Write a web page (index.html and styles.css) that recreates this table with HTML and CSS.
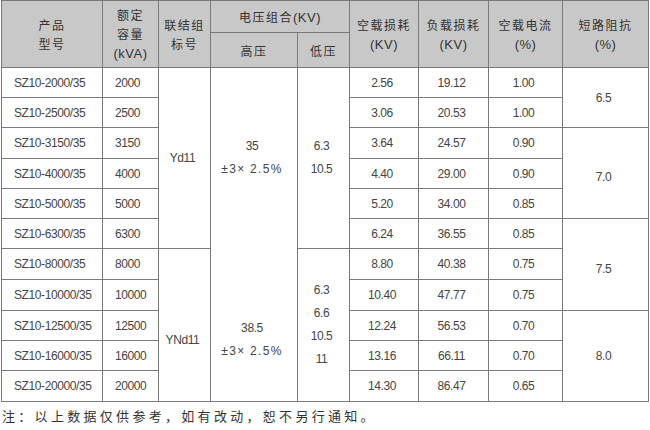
FILE: index.html
```html
<!DOCTYPE html>
<html lang="zh">
<head>
<meta charset="utf-8">
<title>SZ10 35kV 变压器技术参数</title>
<link rel="stylesheet" href="styles.css">
</head>
<body>
<table class="spec">
  <colgroup>
    <col class="c-model"><col class="c-cap"><col class="c-conn"><col class="c-hv"><col class="c-lv">
    <col class="c-nl"><col class="c-ll"><col class="c-cur"><col class="c-imp">
  </colgroup>
  <thead>
    <tr class="h1">
      <th rowspan="2">产品<br>型号</th>
      <th rowspan="2">额定<br>容量<br><span class="lat">(kVA)</span></th>
      <th rowspan="2">联结组<br>标号</th>
      <th colspan="2">电压组合<span class="lat">(KV)</span></th>
      <th rowspan="2">空载损耗<br><span class="lat">(KV)</span></th>
      <th rowspan="2">负载损耗<br><span class="lat">(KV)</span></th>
      <th rowspan="2">空载电流<br><span class="lat">(%)</span></th>
      <th rowspan="2">短路阻抗<br><span class="lat">(%)</span></th>
    </tr>
    <tr class="h2">
      <th>高压</th>
      <th>低压</th>
    </tr>
  </thead>
  <tbody>
    <tr>
      <td class="l">SZ10-2000/35</td><td class="l">2000</td>
      <td rowspan="6">Yd11</td>
      <td rowspan="6" class="multi">35<br><span class="tap">±3× 2.5%</span></td>
      <td rowspan="6" class="multi">6.3<br>10.5</td>
      <td>2.56</td><td>19.12</td><td>1.00</td>
      <td rowspan="2">6.5</td>
    </tr>
    <tr>
      <td class="l">SZ10-2500/35</td><td class="l">2500</td>
      <td>3.06</td><td>20.53</td><td>1.00</td>
    </tr>
    <tr class="t">
      <td class="l">SZ10-3150/35</td><td class="l">3150</td>
      <td>3.64</td><td>24.57</td><td>0.90</td>
      <td rowspan="3" class="imp">7.0</td>
    </tr>
    <tr>
      <td class="l">SZ10-4000/35</td><td class="l">4000</td>
      <td>4.40</td><td>29.00</td><td>0.90</td>
    </tr>
    <tr>
      <td class="l">SZ10-5000/35</td><td class="l">5000</td>
      <td>5.20</td><td>34.00</td><td>0.85</td>
    </tr>
    <tr>
      <td class="l">SZ10-6300/35</td><td class="l">6300</td>
      <td>6.24</td><td>36.55</td><td>0.85</td>
      <td rowspan="3" class="imp">7.5</td>
    </tr>
    <tr class="t">
      <td class="l">SZ10-8000/35</td><td class="l">8000</td>
      <td rowspan="5" class="low">YNd11</td>
      <td rowspan="5" class="multi low joined">38.5<br><span class="tap">±3× 2.5%</span></td>
      <td rowspan="5" class="multi">6.3<br>6.6<br>10.5<br>11</td>
      <td>8.80</td><td>40.38</td><td>0.75</td>
    </tr>
    <tr class="t">
      <td class="l">SZ10-10000/35</td><td class="l">10000</td>
      <td>10.40</td><td>47.77</td><td>0.75</td>
    </tr>
    <tr>
      <td class="l">SZ10-12500/35</td><td class="l">12500</td>
      <td>12.24</td><td>56.53</td><td>0.70</td>
      <td rowspan="3">8.0</td>
    </tr>
    <tr>
      <td class="l">SZ10-16000/35</td><td class="l">16000</td>
      <td>13.16</td><td>66.11</td><td>0.70</td>
    </tr>
    <tr class="t">
      <td class="l">SZ10-20000/35</td><td class="l">20000</td>
      <td>14.30</td><td>86.47</td><td>0.65</td>
    </tr>
  </tbody>
</table>
<p class="note">注：以上数据仅供参考，如有改动，恕不另行通知。</p>
</body>
</html>
```

FILE: styles.css
```css
body {
  margin: 0;
  background: #ffffff;
  color: #444444;
  font-family: "Liberation Sans", "Noto Sans CJK SC", sans-serif;
}

.spec {
  border-collapse: collapse;
  table-layout: fixed;
  width: 648px;
  margin: 0 0 0 1px;
  font-size: 12px;
}

.c-model { width: 101px; }
.c-cap { width: 56px; }
.c-conn { width: 52px; }
.c-hv { width: 87px; }
.c-lv { width: 52px; }
.c-nl { width: 69px; }
.c-ll { width: 70px; }
.c-cur { width: 74px; }
.c-imp { width: 86px; }

.spec th,
.spec td {
  border: 1px solid #7a7a7a;
  padding: 0;
  text-align: center;
  vertical-align: middle;
  white-space: nowrap;
}

.spec td { letter-spacing: -0.4px; }

.spec th {
  background: #c8c8c8;
  font-weight: normal;
  font-family: "Noto Sans CJK SC", sans-serif;
  font-size: 12px;
  letter-spacing: 1.5px;
  line-height: 19px;
  color: #333333;
}

.spec th .lat {
  font-family: "Liberation Sans", sans-serif;
  font-size: 13px;
  letter-spacing: 0.5px;
}

.spec .h1 { height: 32px; }
.spec .h2 { height: 35px; }

.spec tbody tr { height: 30px; }
.spec tbody tr.t { height: 31px; }

.spec td { padding-right: 4px; }
.spec td.l {
  text-align: left;
  padding-left: 12px;
  padding-right: 0;
}

.spec td.multi { line-height: 23px; }
.spec td.low { padding-top: 30px; }
.spec td.imp { padding-top: 8px; }
.spec td.joined { border-top-style: hidden; }

.spec .tap { letter-spacing: 1.3px; }

.note {
  margin: 4px 0 0 2px;
  font-family: "Noto Sans CJK SC", sans-serif;
  font-size: 13px;
  letter-spacing: 3.3px;
  color: #333333;
}
```
